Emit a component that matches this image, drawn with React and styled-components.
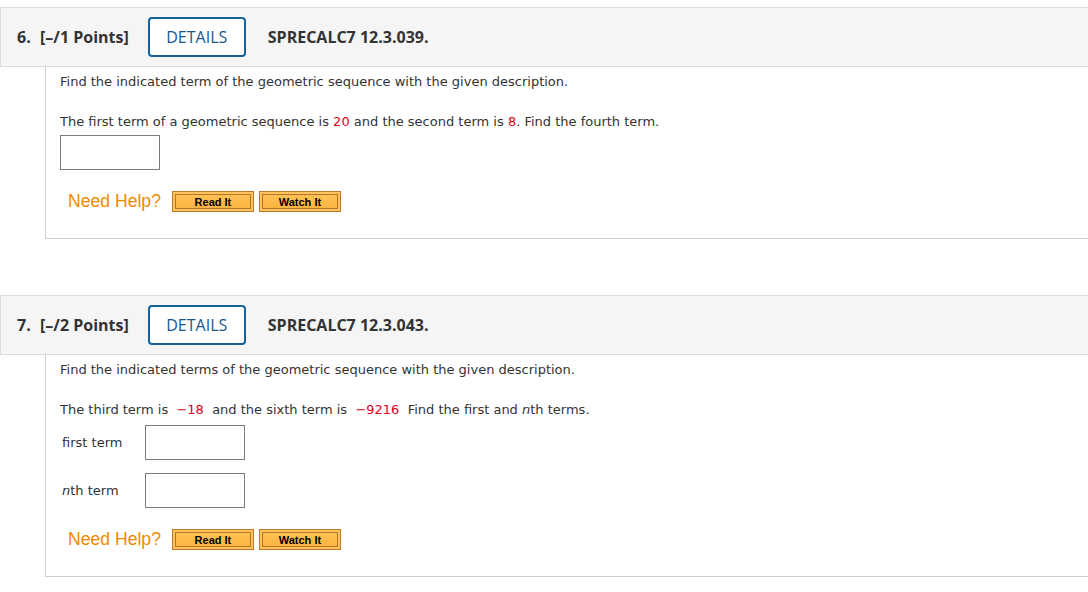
import React from "react";
import styled, { createGlobalStyle } from "styled-components";

const Global = createGlobalStyle`
  html, body { margin: 0; padding: 0; background: #fff; }
  body { font-family: "DejaVu Sans", Verdana, sans-serif; }
`;

const Page = styled.div`
  padding-top: 7px;
  width: 1100px;
`;

const Question = styled.section`
  & + & { margin-top: 56px; }
`;

const Header = styled.div`
  display: flex;
  align-items: center;
  height: 60px;
  box-sizing: border-box;
  background: #f5f5f5;
  border: 1px solid #dcdcdc;
  padding-left: 16px;
  font-family: "Open Sans", sans-serif;
  font-weight: 700;
  font-size: 16px;
  color: #333;
`;

const Num = styled.span`
  width: 23px;
`;

const Points = styled.span`
  margin-right: 19px;
`;

const DetailsBtn = styled.button`
  width: 98px;
  height: 40px;
  box-sizing: border-box;
  border: 2px solid #17629a;
  border-radius: 4px;
  background: #fff;
  color: #17578a;
  font-family: "Open Sans", sans-serif;
  font-size: 16px;
  font-weight: 400;
  margin-right: 22px;
  padding: 0;
`;

const Body = styled.div`
  margin-left: 45px;
  border-left: 1px solid #cfcfcf;
  border-bottom: 1px solid #cfcfcf;
  padding: 5px 0 26px 14px;
  font-size: 13px;
  color: #333;
`;

const Line = styled.p`
  margin: 0;
  line-height: 20px;
  & + & { margin-top: 20px; }
`;

const Red = styled.span`
  color: #e0001b;
`;

const Box = styled.div`
  width: 100px;
  height: 35px;
  box-sizing: border-box;
  border: 1px solid #7a7a7a;
  background: #fff;
  margin-top: ${(p) => p.$top || 0}px;
`;

const FieldRow = styled.div`
  display: flex;
  align-items: center;
  margin-top: ${(p) => p.$top}px;
`;

const Label = styled.span`
  width: 83px;
  padding-left: 2px;
  & i { font-style: italic; }
`;

const HelpRow = styled.div`
  display: flex;
  align-items: center;
  margin-top: ${(p) => p.$top}px;
  padding-left: 8px;
`;

const HelpText = styled.span`
  font-family: "Liberation Sans", Arial, sans-serif;
  font-size: 17.6px;
  color: #ef8a00;
  margin-right: 11px;
`;

const HelpBtn = styled.button`
  width: 82px;
  height: 21px;
  box-sizing: border-box;
  margin-right: 5px;
  padding: 0;
  border: 1px solid #c0772a;
  background: linear-gradient(#ffc55a, #fbb13c);
  box-shadow: inset 0 0 0 2px #ffc45c, inset 0 0 0 3px #b8732a;
  font-family: "Liberation Sans", Arial, sans-serif;
  font-weight: 700;
  font-size: 11px;
  color: #000;
`;

function Help({ top }) {
  return (
    <HelpRow $top={top}>
      <HelpText>Need Help?</HelpText>
      <HelpBtn>Read It</HelpBtn>
      <HelpBtn>Watch It</HelpBtn>
    </HelpRow>
  );
}

function QHeader({ n, pts, code }) {
  return (
    <Header>
      <Num>{n}.</Num>
      <Points>[–/{pts} Points]</Points>
      <DetailsBtn>DETAILS</DetailsBtn>
      <span>{code}</span>
    </Header>
  );
}

export default function App() {
  return (
    <Page>
      <Global />
      <Question>
        <QHeader n={6} pts={1} code="SPRECALC7 12.3.039." />
        <Body>
          <Line>Find the indicated term of the geometric sequence with the given description.</Line>
          <Line>
            The first term of a geometric sequence is <Red>20</Red> and the second term is <Red>8</Red>. Find the fourth term.
          </Line>
          <Box $top={3} />
          <Help top={21} />
        </Body>
      </Question>
      <Question>
        <QHeader n={7} pts={2} code="SPRECALC7 12.3.043." />
        <Body>
          <Line>Find the indicated terms of the geometric sequence with the given description.</Line>
          <Line>
            The third term is <Red>&nbsp;−18&nbsp;</Red> and the sixth term is <Red>&nbsp;−9216&nbsp;</Red> Find the first and <i>n</i>th terms.
          </Line>
          <FieldRow $top={5}>
            <Label>first term</Label>
            <Box />
          </FieldRow>
          <FieldRow $top={13}>
            <Label><i>n</i>th term</Label>
            <Box />
          </FieldRow>
          <Help top={21} />
        </Body>
      </Question>
    </Page>
  );
}
